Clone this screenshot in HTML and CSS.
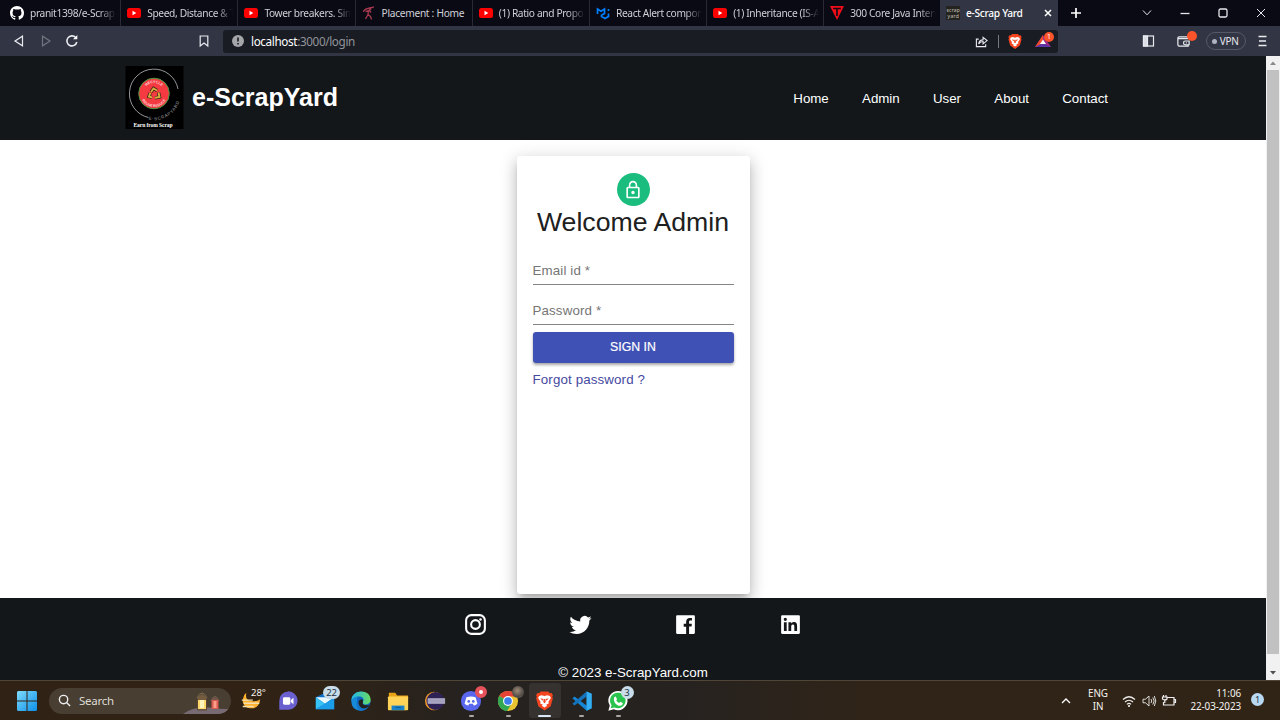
FILE: index.html
```html
<!DOCTYPE html>
<html lang="en">
<head>
<meta charset="utf-8">
<title>e-Scrap Yard</title>
<link rel="stylesheet" href="styles.css">
</head>
<body>
<svg class="defs" aria-hidden="true">
  <defs>
    <symbol id="youtube" viewBox="0 0 14 14"><rect y="2" width="14" height="10" rx="2.5" fill="#f00"/><path d="M5.5 4.8v4.4L9.3 7z" fill="#fff"/></symbol>
    <symbol id="brave" viewBox="0 0 16 18"><path d="M4.5 0h7l1.6 1.7 1.6-.2 1.2 2-.6 1.6.5 1.6-2 7.2L8 18l-5.800-4.100-2-7.200.5-1.600L.1 3.500l1.200-2 1.600.2z" fill="#f4451f"/><path d="M3 4.200l2.400-.6L8 4.400l2.600-.8 2.400.6 1 2-2.300 3.500.3 1.600-2.500 1.200 1 .9L8 15l-2.500-1.600 1-.9L4 11.300l.3-1.600L2 6.200z" fill="#fff"/><path d="M4 6.300l3 .9-.8 1.500zM12 6.300l-3 .9.8 1.500zM7.300 7h1.400l.5 3L8 11l-1.200-1z" fill="#f4451f"/></symbol>
  </defs>
</svg>
<div class="screen">
  <header class="tabs">
    <div class="tab"><svg class="fav" viewBox="0 0 16 16"><path fill="#fff" d="M8 0C3.580 0 0 3.580 0 8c0 3.540 2.290 6.530 5.470 7.590.4.070.550-.170.550-.380 0-.190-.010-.820-.010-1.490-2.010.370-2.530-.490-2.690-.940-.090-.230-.480-.940-.820-1.130-.280-.150-.680-.520-.010-.530.630-.010 1.080.580 1.230.820.720 1.210 1.870.870 2.330.660.070-.520.280-.870.510-1.070-1.780-.2-3.640-.890-3.640-3.950 0-.870.310-1.590.820-2.150-.080-.2-.360-1.020.080-2.120 0 0 .670-.210 2.200.820.640-.180 1.320-.270 2-.270s1.360.090 2 .270c1.530-1.040 2.200-.820 2.200-.820.440 1.100.160 1.920.080 2.120.510.560.820 1.270.820 2.150 0 3.070-1.870 3.750-3.650 3.950.290.250.540.730.540 1.480 0 1.070-.010 1.930-.010 2.200 0 .210.150.460.550.380A8 8 0 0 0 16 8c0-4.420-3.580-8-8-8z"/></svg><span>pranit1398/e-Scrap</span></div>
    <div class="tab"><svg class="fav"><use href="#youtube"/></svg><span>Speed, Distance &amp; T</span></div>
    <div class="tab"><svg class="fav"><use href="#youtube"/></svg><span>Tower breakers. Sim</span></div>
    <div class="tab"><svg class="fav" viewBox="0 0 14 14" fill="none" stroke="#a83a50"><path d="M1.500 6C1.500 2.500 6 2.500 12 .8M3.500 5.500l4-1 1.500 2M6.500 4.500l-.5 4 2.500 2 1 3M6 8.500l-2.500 4.500" stroke-width="1.300"/><circle cx="8" cy="2.800" r="1" fill="#a83a50"/></svg><span class="full">Placement : Home</span></div>
    <div class="tab"><svg class="fav"><use href="#youtube"/></svg><span>(1) Ratio and Propo</span></div>
    <div class="tab"><svg class="fav" viewBox="0 0 14 14" fill="none" stroke="#007fff" stroke-width="1.700"><path d="M1.500 8V3l3.500 2.200L8.500 3v4.500L5.500 9.300v1.300L9 12.500l3.500-2V7.500M12.500 3v2"/></svg><span>React Alert compon</span></div>
    <div class="tab"><svg class="fav"><use href="#youtube"/></svg><span>(1) Inheritance (IS-A</span></div>
    <div class="tab"><svg class="fav" viewBox="0 0 14 14"><path d="M0 0h14L7 14z" fill="#f00c18"/><path d="M3.200 2.500h7.600M7 3v7" stroke="#160a12" stroke-width="1.700"/></svg><span>300 Core Java Interv</span></div>
    <div class="tab active"><svg class="fav" viewBox="0 0 14 14"><rect width="14" height="14" fill="#24231f"/><text x="7" y="5.600" text-anchor="middle" textLength="13" class="favtext">scrap</text><text x="7" y="11.600" text-anchor="middle" textLength="11" class="favtext">yard</text></svg><span>e-Scrap Yard</span><svg class="close" viewBox="0 0 8 8"><path d="M1 1l6 6M7 1L1 7" stroke="#fff" stroke-width="1.500"/></svg></div>
    <svg class="newtab" viewBox="0 0 12 12"><path d="M6 1v10M1 6h10" stroke="#fff" stroke-width="1.700"/></svg>
    <div class="winctl">
      <svg viewBox="0 0 14 14"><path d="M3 4.500L7 8.800l4-4.300"/></svg>
      <svg viewBox="0 0 14 14"><path d="M2.500 7.500h9" stroke-width="1.300"/></svg>
      <svg viewBox="0 0 14 14"><rect x="3" y="3" width="8" height="8" rx="1.500" stroke-width="1.300"/></svg>
      <svg viewBox="0 0 14 14"><path d="M3 3l8 8M11 3l-8 8"/></svg>
    </div>
  </header>
  <div class="toolbar">
    <div class="nav-buttons">
      <svg viewBox="0 0 14 14"><path d="M10.500 2.200v9.600L3 7z"/></svg>
      <svg viewBox="0 0 14 14" class="dim"><path d="M3.500 2.200v9.600L11 7z"/></svg>
      <svg viewBox="0 0 14 14"><path d="M10.700 3.600A5 5 0 1 0 11.800 8" stroke-width="1.600"/><path d="M8 5.300h4.300V1z" fill="#fff" stroke="none"/></svg>
    </div>
    <svg class="bookmark" viewBox="0 0 12 14"><path d="M2.200 2h7.600v10L6 9l-3.800 3z"/></svg>
    <div class="address">
      <svg class="info" viewBox="0 0 12 12"><circle cx="6" cy="6" r="6" fill="#a4a6aa"/><path d="M6 2.500v4M6 8v1.600" stroke="#191c23" stroke-width="1.600"/></svg>
      <div class="url"><b>localhost</b>:3000/login</div>
      <svg class="share" viewBox="0 0 14 14"><path d="M4 4.500H1.500v8h10V10M4 9.800c.2-3 1.500-4.500 4.700-4.600V2.500L13 6 8.700 9.500V7C6.500 7 5 8 4 9.800z"/></svg>
      <i class="rule"></i>
      <svg class="lion"><use href="#brave"/></svg>
      <div class="bat"><svg viewBox="0 0 16 14"><path d="M8 1l8 12H0z" fill="#9e2a84"/><path d="M8 1L0 13l8-3.800z" fill="#f14c2c"/><path d="M0 13h16L8 9z" fill="#5b35a5"/><path d="M8 5.500L11 10H5z" fill="#fff"/></svg><em>1</em></div>
    </div>
    <div class="tools">
      <svg viewBox="0 0 12 12"><rect x="1" y="1" width="10" height="10"/><rect x="1" y="1" width="4" height="10" fill="#dcdee5"/></svg>
      <div class="wallet"><svg viewBox="0 0 16 14"><path d="M13 4.500V2.500H3.500Q2 2.500 2 4v7q0 1.500 1.500 1.500h9.500V11M2 4.500h11M10 7H14v4H10Q8 11 8 9t2-2M10.500 9h1" stroke-width="1.300"/></svg><em></em></div>
      <div class="vpn"><i></i>VPN</div>
      <svg viewBox="0 0 12 12"><path d="M2 1.500h8M2.500 6h7M2 10.500h8" stroke-width="1.500"/></svg>
    </div>
  </div>
  <div class="viewport">
    <div class="page">
      <nav class="navbar">
        <svg class="logo" viewBox="0 0 58 63">
          <rect width="58" height="63" fill="#000"/>
          <path d="M23 51.500A24.500 24.500 0 1 1 52.500 23" fill="none" stroke="#b9bcc0" stroke-width=".8"/>
          <circle cx="28.500" cy="27.500" r="15.300" fill="#f53a42" stroke="#4c9a42" stroke-width="1"/>
          <path id="ringtop" d="M18 27.500a10.500 10.500 0 0 1 21 0" fill="none"/>
          <path id="ringbot" d="M15 27.500a13.500 13.500 0 0 0 27 0" fill="none"/>
          <path id="outer" d="M23 53.500A26.500 26.500 0 0 0 55 25" fill="none"/>
          <text class="ringtext"><textPath href="#ringtop" startOffset="50%" text-anchor="middle">RECYCLE</textPath></text>
          <text class="ringtext"><textPath href="#ringbot" startOffset="50%" text-anchor="middle">REUSE REDUCE</textPath></text>
          <text class="outertext"><textPath href="#outer">E-SCRAPYARD</textPath></text>
          <g fill="none" stroke="#302514" stroke-width="3.400"><path d="M25.500 26l2.500-3.500 3.500 2M33 26.500l1 4.500-4.500.8M26.500 31.500l-3-1 1.200-3.500"/></g>
          <g fill="none" stroke="#d9aa3d" stroke-width="2"><path d="M25.500 26l2.500-3.500 3.500 2M33 26.500l1 4.500-4.500.8M26.500 31.500l-3-1 1.200-3.500"/></g>
          <text x="27.500" y="60.500" text-anchor="middle" textLength="39" class="tagline">Earn from Scrap</text>
        </svg>
        <h1>e-ScrapYard</h1>
        <ul><li>Home</li><li>Admin</li><li>User</li><li>About</li><li>Contact</li></ul>
      </nav>
      <main>
        <form class="card">
          <div class="avatar"><svg viewBox="0 0 24 24"><path fill="#fff" d="M12 17c1.100 0 2-.9 2-2s-.9-2-2-2-2 .9-2 2 .9 2 2 2zm6-9h-1V6c0-2.760-2.240-5-5-5S7 3.240 7 6v2H6c-1.100 0-2 .9-2 2v10c0 1.100.9 2 2 2h12c1.100 0 2-.9 2-2V10c0-1.100-.9-2-2-2zM8.900 6c0-1.710 1.390-3.100 3.100-3.100s3.100 1.390 3.100 3.100v2H8.900V6zM18 20H6V10h12v10z"/></svg></div>
          <h2>Welcome Admin</h2>
          <div class="field email">Email id *</div>
          <div class="field">Password *</div>
          <div class="submit">SIGN IN</div>
          <div class="forgot">Forgot password ?</div>
        </form>
      </main>
      <footer>
        <div class="social">
          <svg viewBox="0 0 24 24" fill="none" stroke="#fff" stroke-width="2"><rect x="3" y="3" width="18" height="18" rx="5"/><circle cx="12" cy="12" r="4.200"/><circle cx="16.800" cy="7.200" r="1.200" fill="#fff" stroke="none"/></svg>
          <svg viewBox="-1.500 -2 27 27"><path fill="#fff" d="M23.953 4.570a10 10 0 0 1-2.825.775 4.958 4.958 0 0 0 2.163-2.723c-.951.555-2.005.959-3.127 1.184a4.920 4.920 0 0 0-8.384 4.482C7.690 8.095 4.067 6.130 1.640 3.162a4.822 4.822 0 0 0-.666 2.475c0 1.710.870 3.213 2.188 4.096a4.904 4.904 0 0 1-2.228-.616v.060a4.923 4.923 0 0 0 3.946 4.827 4.996 4.996 0 0 1-2.212.085 4.936 4.936 0 0 0 4.604 3.417 9.867 9.867 0 0 1-6.102 2.105c-.390 0-.779-.023-1.170-.067a13.995 13.995 0 0 0 7.557 2.209c9.053 0 13.998-7.496 13.998-13.985 0-.210 0-.420-.015-.630A9.935 9.935 0 0 0 24 4.590z"/></svg>
          <svg viewBox="0 0 24 24"><path fill="#fff" d="M20 3H4a1 1 0 0 0-1 1v16a1 1 0 0 0 1 1h8.615v-6.960h-2.338v-2.725h2.338v-2c0-2.325 1.420-3.592 3.500-3.592.699-.002 1.399.034 2.095.107v2.420h-1.435c-1.128 0-1.348.538-1.348 1.325v1.735h2.697l-.350 2.725h-2.348V21H20a1 1 0 0 0 1-1V4a1 1 0 0 0-1-1z"/></svg>
          <svg viewBox="0 0 24 24"><path fill="#fff" d="M20 3H4a1 1 0 0 0-1 1v16a1 1 0 0 0 1 1h16a1 1 0 0 0 1-1V4a1 1 0 0 0-1-1zM8.339 18.337H5.667v-8.590h2.672v8.590zM7.003 8.574a1.548 1.548 0 1 1 0-3.096 1.548 1.548 0 0 1 0 3.096zm11.335 9.763h-2.669V14.160c0-.996-.018-2.277-1.388-2.277-1.390 0-1.601 1.086-1.601 2.207v4.248h-2.667v-8.590h2.560v1.174h.037c.355-.675 1.227-1.387 2.524-1.387 2.704 0 3.203 1.778 3.203 4.092v4.710z"/></svg>
        </div>
        <p>© 2023 e-ScrapYard.com</p>
      </footer>
    </div>
    <div class="scrollbar"><svg viewBox="0 0 14 14"><path d="M4 9h6L7 5.500z" fill="#8a8a8a"/></svg><i></i><svg viewBox="0 0 14 14"><path d="M4 5h6L7 8.500z" fill="#505050"/></svg></div>
  </div>
  <div class="taskbar">
    <svg class="start" viewBox="0 0 20 20"><defs><linearGradient id="win" x2="1" y2="1"><stop stop-color="#7fdcfb"/><stop offset="1" stop-color="#0c8ee8"/></linearGradient></defs><path fill="url(#win)" d="M0 1l1-1h8.500v9.500H0zM10.500 0H19l1 1v8.500h-9.500zM0 10.500h9.500V20H1l-1-1zM10.500 10.500H20V19l-1 1h-8.500z"/></svg>
    <div class="search"><svg class="glass" viewBox="0 0 14 14"><circle cx="6" cy="6" r="4.500"/><path d="M9.500 9.500L13 13"/></svg><span>Search</span>
      <svg class="lantern" viewBox="0 0 48 26"><path d="M0 26Q12 17 31 20t17-3v9z" fill="#776a72"/><path d="M14 10Q19 0 24 10" fill="none" stroke="#806f50"/><path d="M15 9l4-3 4 3 1 3H14z" fill="#755c40"/><rect x="14.500" y="12" width="9" height="9" fill="#ffd76a"/><rect x="17" y="12" width="4" height="8" fill="#fff4b8"/><path d="M14.500 11v11h9V11" fill="none" stroke="#59482d"/><path d="M28 13q4-9 8 0" fill="none" stroke="#765"/><path d="M28 12l4-3 4 3z" fill="#735349"/><rect x="28.500" y="12" width="7" height="9" fill="#d85b51"/><rect x="30.500" y="13" width="3" height="7" fill="#ff9d8a"/></svg>
    </div>
    <div class="apps">
      <div class="app"><svg viewBox="0 0 24 24"><path d="M7 3Q5 11 12 12t10-2q-1 10-10 10Q5 20 3 13 3 6 7 3z" fill="#ffb22e"/><path d="M2 11h12M4 14.500h17M3 18h12" stroke="#f4dfb2" stroke-width="1.500"/></svg><b class="temp">28°</b></div>
      <div class="app"><svg viewBox="0 0 24 24"><path d="M2.500 21.500V12a10 10 0 1 1 10 9.500z" fill="#6a60cf"/><rect x="6.500" y="8" width="8" height="8" rx="1.500" fill="#fff"/><path d="M15 11l3-2.500v7L15 13z" fill="#fff"/></svg></div>
      <div class="app"><svg viewBox="0 0 24 24"><path d="M2 8l10-5 10 5v13H2z" fill="#0f6fc6"/><path d="M2 8h20L12 15z" fill="#e9f8ff"/><path d="M2 8l10 7L2 21z" fill="#37c2f6"/><path d="M22 8v13H2l10-6z" fill="#1b9de9"/></svg><em>22</em></div>
      <div class="app"><svg viewBox="0 0 24 24"><defs><linearGradient id="edge" x2="1"><stop stop-color="#22b5e9"/><stop offset="1" stop-color="#68dc62"/></linearGradient></defs><circle cx="12" cy="12" r="10.500" fill="#0d65bd"/><path d="M1.500 12C1-1 22.500-2 22.500 11c0 6-9.500 6-8.500 2 2-3 0-6-4-6-4 0-7 2-8.500 5z" fill="url(#edge)"/><path d="M14 13q-1 5 7.500 3-3 5-8.500 4-5-1-4-7 1-3 4-3 2 1 1 3z" fill="#24221f"/><path d="M8 11q-3 8 5 11.500Q1.500 23 1.500 12q3-5 8.500-5-3 1-2 4z" fill="#178ad9"/><path d="M9 12q0 7 6 8.500 3 0 5-2-4 5-9 4-6-3-2-10.500z" fill="#1475c8"/></svg></div>
      <div class="app"><svg viewBox="0 0 24 24"><path d="M2 3h7l2 3h12v15H2z" fill="#e8a416"/><rect x="1" y="7" width="22" height="15" rx="1" fill="#ffd258"/><path d="M5 22v-5h14v5z" fill="#1982c9"/><path d="M9 19h6" stroke="#0c5a91"/></svg></div>
      <div class="app"><svg viewBox="0 0 24 24"><circle cx="11" cy="12" r="10" fill="#ed972d"/><circle cx="12.500" cy="12" r="9.800" fill="#2e2255"/><path d="M4 9h19v6H4z" fill="#b9b6cd"/><path d="M4 11h19M4 13h19" stroke="#8882a8" stroke-width=".8"/></svg></div>
      <div class="app on"><svg viewBox="0 0 24 24"><circle cx="12" cy="12" r="11" fill="#5967ef"/><path d="M7 8q5-2 10 0l2 7q-2 2-4 2l-1-2h-4l-1 2q-2 0-4-2z" fill="#fff"/><circle cx="9.500" cy="12.500" r="1.500" fill="#5967ef"/><circle cx="14.500" cy="12.500" r="1.500" fill="#5967ef"/></svg><em class="record"></em></div>
      <div class="app on"><svg viewBox="0 0 24 24"><circle cx="12" cy="12" r="11" fill="#eac330"/><path d="M12 12L2.500 6.500A11 11 0 0 1 21.800 7H12z" fill="#e54335"/><path d="M2.500 6.500a11 11 0 0 0 8.500 16.500L16.500 14 12 12z" fill="#31a853"/><circle cx="12" cy="12" r="5.400" fill="#fff"/><circle cx="12" cy="12" r="4.200" fill="#3a7ded"/></svg><em class="profile"></em></div>
      <div class="app on current"><svg class="big-lion"><use href="#brave"/></svg></div>
      <div class="app on"><svg viewBox="0 0 24 24"><path d="M17 1.500l5.500 2.500v16L17 22.500 1.500 9l2.300-2L17 17z" fill="#1685d2"/><path d="M17 1.500V7L3.800 17l-2.300-2z" fill="#1374bd"/><path d="M17 1.500l5.500 2.500v16L17 22.500z" fill="#35aef2"/></svg></div>
      <div class="app on"><svg viewBox="0 0 24 24"><path d="M1.500 22.500L3 17a10.500 10.500 0 1 1 4.500 4z" fill="#fff"/><path d="M4 20l1-3.500a8.500 8.500 0 1 1 3 2.500z" fill="#2ac34d"/><path d="M8 7.500l1.500-.5 1.500 3-1 1.200q1.200 2.200 3.300 3l1.200-1.300 2.700 1.300q0 3-3 3C10 17 6 12 8 7.500z" fill="#fff"/></svg><em>3</em></div>
    </div>
    <div class="tray">
      <svg class="chev" viewBox="0 0 12 12"><path d="M2 8l4-4 4 4"/></svg>
      <div class="lang">ENG<br>IN</div>
      <div class="status">
        <svg viewBox="0 0 14 14"><path d="M1 5.500Q7 0 13 5.500M3 8q4-3.500 8 0M5 10.300q2-2 4 0"/><circle cx="7" cy="12" r="1" fill="#fff" stroke="none"/></svg>
        <svg viewBox="0 0 14 14"><path d="M1 5.200h2.500L7 2v10L3.500 8.800H1zM9 5q1.500 2 0 4M10.800 3.500q2.800 3.500 0 7M12.300 2q3 5 0 10" stroke-width=".9"/></svg>
        <svg viewBox="0 0 14 14"><path d="M5 3.500h7v7.500H1.500V8M12 5.500h1.500v3H12M1.500 1v2M4 1v2M.5 3h4.500v2Q3 7 .5 5zM2.800 6v3"/></svg>
      </div>
      <div class="clock">11:06<br>22-03-2023</div>
      <div class="notice">1</div>
    </div>
  </div>
</div>
</body>
</html>
```
FILE: styles.css
```css
* { box-sizing: border-box; }
body { margin: 0; overflow: hidden; font-family: "Liberation Sans", Arial, sans-serif; }
svg { display: block; flex: none; overflow: visible; }
em { font-style: normal; }
.defs { position: absolute; width: 0; height: 0; }
.screen { width: 1280px; height: 720px; display: flex; flex-direction: column; overflow: hidden; }
.tabs, .toolbar, .taskbar { font-family: "Noto Sans", sans-serif; flex: none; display: flex; align-items: center; }

.tabs { height: 26px; padding-left: 4px; background: #0a0a15; color: #cfd0d5; font-size: 10.2px; letter-spacing: -.36px; }
.tab { width: 117.200px; height: 26px; flex: none; display: flex; align-items: center; padding: 0 4px 0 6px; gap: 6px; border-right: 1px solid #292a34; }
.tab:nth-child(8) { border-right: 0; width: 115.600px; }
.tab span { flex: 1; min-width: 0; white-space: nowrap; line-height: 18px; mask-image: linear-gradient(90deg, #000 80%, transparent); }
.tab span.full { mask-image: none; letter-spacing: -.3px; }
.fav { width: 14px; height: 14px; }
.favtext { font: 5px "Noto Sans", sans-serif; fill: #c8c5bd; }
.tab.active { width: 118px; background: #323543; color: #fff; border: 0; padding-right: 6px; }
.tab.active span { mask-image: none; font-weight: 500; letter-spacing: -.3px; }
.close { width: 8px; height: 8px; }
.newtab { width: 12px; height: 12px; margin-left: 12px; }
.winctl { margin-left: auto; padding-right: 12px; display: flex; gap: 24px; }
.winctl svg { width: 14px; height: 14px; fill: none; stroke: #e7e7eb; stroke-width: 1; }

.toolbar { height: 30px; background: #323543; }
.toolbar svg { fill: none; stroke: #e9ebf0; stroke-width: 1.2; }
.nav-buttons { display: flex; gap: 12.500px; padding-left: 12px; width: 198px; }
.nav-buttons svg { width: 14px; height: 14px; position: relative; top: -.5px; }
.nav-buttons .dim { opacity: .35; }
.bookmark { width: 12px; height: 14px; }
.address { display: flex; align-items: center; width: 835px; height: 23px; margin-left: 13px; padding: 0 4px 0 9px; border-radius: 3px; background: #191c23; }
.address .info { width: 12px; height: 12px; stroke: none; }
.url { flex: 1; margin-left: 7px; color: #92949b; font-size: 11.700px; line-height: 20px; letter-spacing: -.36px; }
.url b { font-weight: 400; color: #fff; }
.share { width: 13px; height: 13px; }
.rule { width: 1px; height: 13px; background: #777982; margin: 0 9px 0 10px; }
.address .lion { width: 14px; height: 15px; stroke: none; }
.bat { position: relative; margin-left: 13px; width: 19px; }
.bat svg { width: 16px; height: 14px; stroke: none; }
.bat em { position: absolute; left: 9px; top: -2px; width: 10px; height: 10px; border-radius: 50%; background: #fb542b; color: #fff; font-size: 7px; line-height: 10px; text-align: center; }
.tools { flex: 1; display: flex; align-items: center; padding: 0 11px 0 84px; justify-content: space-between; }
.tools > svg { width: 13px; height: 12px; }
.wallet { position: relative; margin-left: 8px; }
.wallet svg { width: 15px; height: 14px; }
.wallet em { position: absolute; left: 11px; top: -3px; width: 10px; height: 10px; border-radius: 50%; background: #fb542b; }
.vpn { width: 40px; height: 18px; border: 1px solid #555968; border-radius: 10px; display: flex; align-items: center; gap: 3px; padding-left: 5px; margin-left: 1px; color: #e6e8ef; font-size: 10px; letter-spacing: -.2px; }
.tools > svg:last-child { margin-left: -3px; }
.vpn i { width: 5px; height: 5px; border-radius: 50%; background: #afb2bf; }

.viewport { height: 624px; display: flex; flex: none; }
.page { width: 1266px; height: 624px; overflow: hidden; background: #fff; display: flex; flex-direction: column; }
.navbar { height: 83.500px; flex: none; display: flex; align-items: center; background: #13171a; color: #fff; padding: 0 158px 0 125px; }
.logo { width: 59px; height: 63px; }
.ringtext { font: bold 3.600px "Liberation Sans", sans-serif; fill: #ffd6d5; }
.outertext { font: 4.300px "Liberation Sans", sans-serif; fill: #a8aaae; letter-spacing: .8px; }
.tagline { font: bold 5.500px "Liberation Serif", serif; fill: #fff; }
.navbar h1 { margin: 0 0 2px 8px; font-size: 25px; line-height: 30px; }
.navbar ul { margin: 1px 0 0 auto; padding: 0; display: flex; gap: 33.300px; list-style: none; font-size: 13.330px; letter-spacing: -.03px; }
main { flex: 1; display: flex; justify-content: center; align-items: flex-start; padding-top: 16px; min-height: 0; }
.card { width: 233px; height: 438px; padding: 17.500px 16px; border-radius: 3px; background: #fff; box-shadow: 0 5px 6px -3px rgba(0,0,0,.2), 0 8px 14px 1px rgba(0,0,0,.14), 0 3px 18px 2px rgba(0,0,0,.12); }
.avatar { width: 33px; height: 33px; margin: 0 auto; border-radius: 50%; background: #1bbd7e; display: flex; align-items: center; justify-content: center; }
.avatar svg { width: 20px; height: 20px; }
h2 { margin: 0 -10px 18px; color: #202020; text-align: center; font-weight: 400; font-size: 26.660px; line-height: 32px; white-space: nowrap; }
.field { height: 40px; padding-top: 18px; color: #757575; font-size: 13.330px; letter-spacing: .13px; line-height: 16px; border-bottom: 1px solid #858585; }
.field.email { height: 29px; padding-top: 7px; }
.submit { height: 31px; margin-top: 6.500px; border-radius: 3px; background: #3f51b5; color: #fff; text-align: center; line-height: 31px; font-size: 12.300px; -webkit-text-stroke: .2px #fff; box-shadow: 0 2px 3px rgba(0,0,0,.35); }
.forgot { margin-top: 8px; color: #4549a0; font-size: 13.330px; line-height: 17px; letter-spacing: .13px; }
footer { height: 82.500px; flex: none; background: #13171a; color: #fff; text-align: center; font-size: 13.330px; }
.social { display: flex; justify-content: center; gap: 80.300px; padding-top: 14.500px; }
.social svg { width: 25px; height: 25px; }
footer p { margin: 28px 0 0; line-height: 16px; }
.scrollbar { width: 14px; height: 624px; background: #f1f1f1; display: flex; flex-direction: column; }
.scrollbar svg { width: 14px; height: 14px; }
.scrollbar i { height: 584px; margin: 0 1px auto; background: #c1c1c1; }

.taskbar { height: 40px; background: linear-gradient(90deg, #302315 0, #302315 24%, #252220 37%, #252220 52%, #302418 68%, #302417 100%); border-top: 1px solid #504638; color: #f5f3ef; padding-left: 17px; }
.start { width: 20px; height: 20px; }
.search { width: 182px; height: 26px; margin-left: 12px; border-radius: 13px; background: #483e31; display: flex; align-items: center; padding-left: 9px; overflow: hidden; font-size: 11.500px; letter-spacing: -.25px; }
.glass { width: 13px; height: 13px; fill: none; stroke: #eee; stroke-width: 1.500; }
.search span { margin-left: 8px; color: #dfdbd5; }
.lantern { width: 48px; height: 26px; margin-left: auto; }
.apps { display: flex; margin-left: 2px; }
.app { position: relative; width: 36.700px; height: 39px; display: flex; align-items: center; justify-content: center; }
.app > svg { width: 22px; height: 22px; }
.app em { position: absolute; right: 3px; top: 5px; min-width: 13px; height: 13px; padding: 0 3px; border-radius: 7px; background: #c8dce9; color: #1c3444; font-size: 9.500px; line-height: 13px; text-align: center; }
.app .temp { position: absolute; left: 18px; top: 5px; font-weight: 400; font-size: 9.500px; line-height: 13px; }
.app em.record { width: 12px; min-width: 0; height: 12px; border: 4px solid #e5525a; background: #fff; padding: 0; }
.app em.profile { width: 12px; min-width: 0; height: 12px; background: radial-gradient(circle at 45% 40%, #a18b79, #504b46 60%, #7b7770); padding: 0; }
.app.on::after { content: ""; position: absolute; bottom: 3px; width: 5px; height: 2px; border-radius: 1px; background: #aaa7a4; }
.app.current::before { content: ""; position: absolute; inset: 2px 2px; border-radius: 3px; background: #353230; }
.app.current::after { width: 13px; background: #dce5f6; }
.app .big-lion { position: relative; width: 17px; height: 20px; }
.tray { margin-left: auto; display: flex; align-items: center; padding-right: 16px; font-size: 9.900px; line-height: 13px; letter-spacing: -.1px; }
.chev { width: 12px; height: 12px; fill: none; stroke: #fff; stroke-width: 1.300; }
.lang { width: 28px; margin-left: 12px; text-align: center; }
.status { display: flex; gap: 6px; margin-left: 10px; }
.status svg { width: 14px; height: 14px; fill: none; stroke: #eee; stroke-width: 1.200; }
.clock { width: 60px; margin: -2px 0 0 5px; text-align: right; white-space: nowrap; }
.lang { margin-top: -1px; }
.notice { width: 13px; height: 13px; margin: -2px 0 0 10px; border-radius: 50%; background: #b9d9f2; color: #234; text-align: center; font-size: 9px; }
```
